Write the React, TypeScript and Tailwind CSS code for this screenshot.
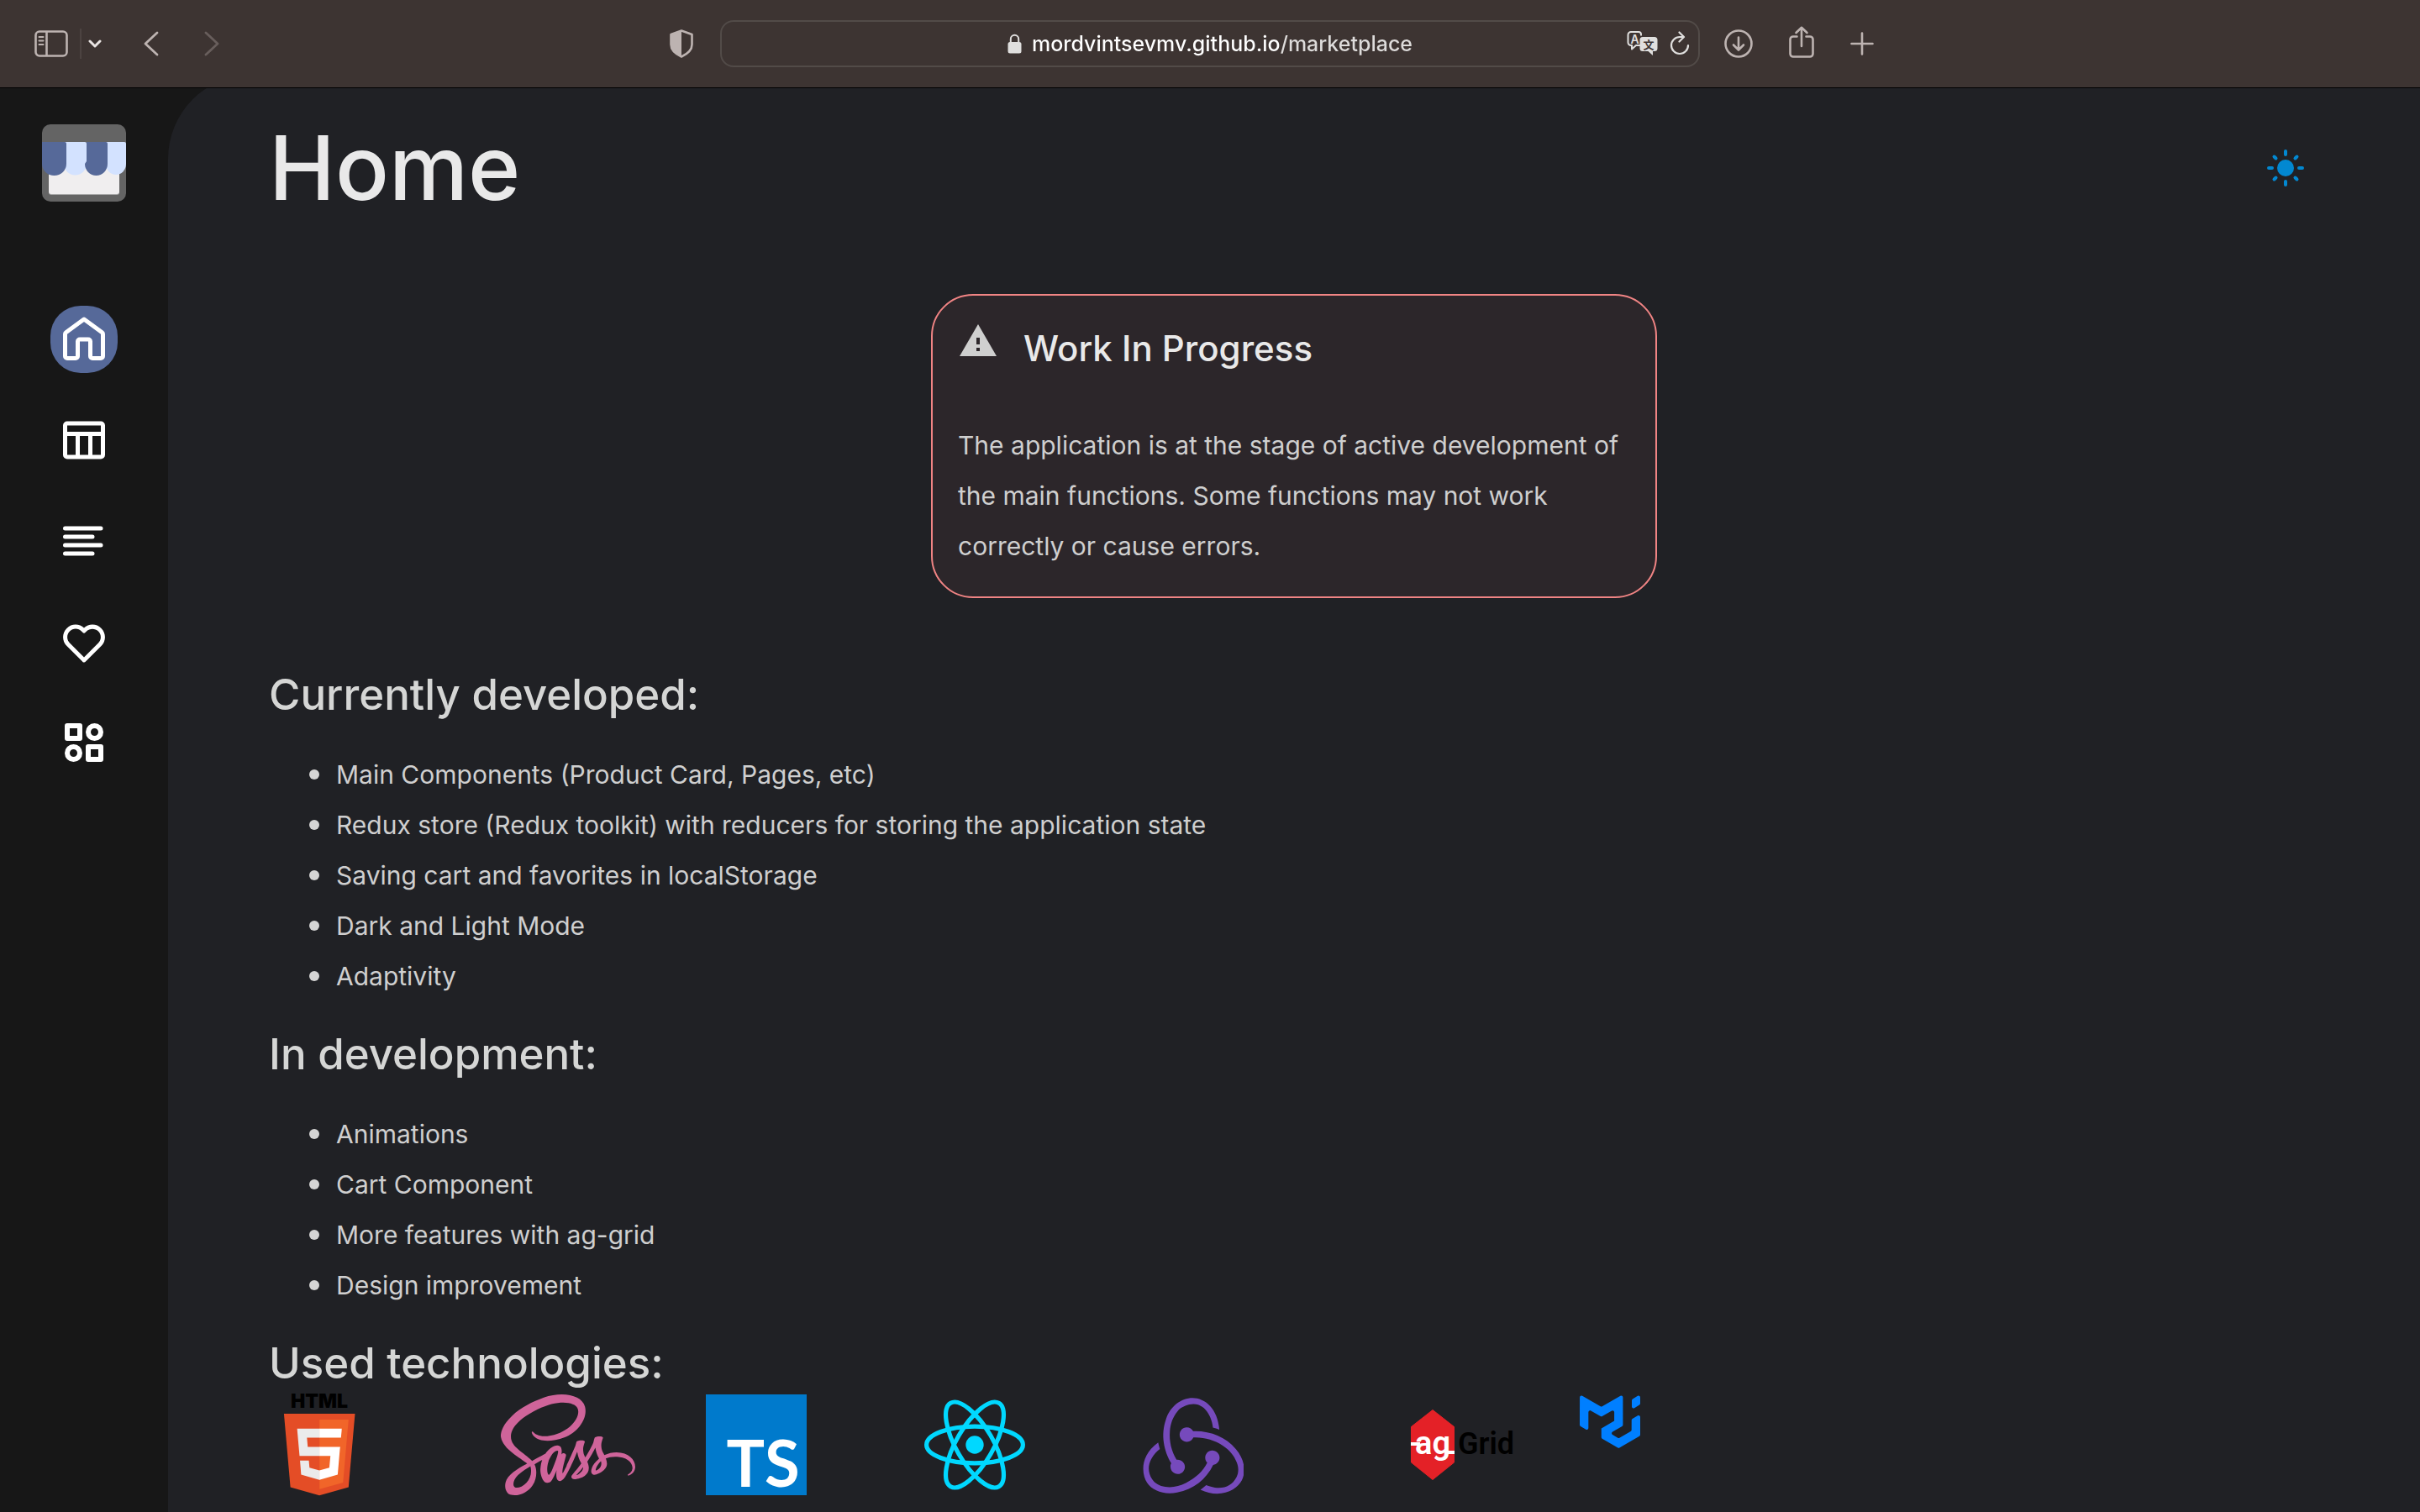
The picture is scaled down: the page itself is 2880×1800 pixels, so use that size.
import type { ReactNode } from "react";
import { BiHeart } from "react-icons/bi";
import { FaSass } from "react-icons/fa";

const developed = [
  "Main Components (Product Card, Pages, etc)",
  "Redux store (Redux toolkit) with reducers for storing the application state",
  "Saving cart and favorites in localStorage",
  "Dark and Light Mode",
  "Adaptivity",
];

const inDevelopment = ["Animations", "Cart Component", "More features with ag-grid", "Design improvement"];

function ToolbarButton({ label, children }: { label: string; children: ReactNode }) {
  return (
    <button type="button" aria-label={label} className="flex shrink-0 items-center justify-center text-[#bdb3b1]">
      {children}
    </button>
  );
}

function Toolbar() {
  return (
    <header className="grid h-[105px] shrink-0 grid-cols-[1fr_40.5%_1fr] items-center border-b border-black bg-[#3d3432]">
      <div className="flex items-center pr-8 pl-[41px]">
        <ToolbarButton label="Show sidebar">
          <svg width="40" height="34" viewBox="0 0 40 34" fill="none" stroke="currentColor" strokeWidth="2.6">
            <rect x="1.5" y="2.5" width="37" height="29" rx="4.5" />
            <path d="M14.5 2.5v29" />
            <path d="M5.5 9h5M5.5 13.5h5M5.5 18h5" strokeWidth="2" strokeLinecap="round" />
          </svg>
        </ToolbarButton>
        <span className="ml-3.5 h-9 w-0.5 bg-[#4c4341]" />
        <span className="ml-2 flex text-[#e9e4e3]">
          <button type="button" aria-label="Sidebar options">
            <svg width="16" height="12" viewBox="0 0 16 12" fill="none" stroke="currentColor" strokeWidth="3" strokeLinecap="round" strokeLinejoin="round">
              <path d="M2 3l6 6 6-6" />
            </svg>
          </button>
        </span>
        <div className="ml-[50px] flex gap-[54px]">
          <ToolbarButton label="Back">
            <svg width="18" height="30" viewBox="0 0 18 30" fill="none" stroke="currentColor" strokeWidth="2.8" strokeLinecap="round" strokeLinejoin="round">
              <path d="M16 2L2 15l14 13" />
            </svg>
          </ToolbarButton>
          <ToolbarButton label="Forward">
            <svg width="18" height="30" viewBox="0 0 18 30" fill="none" stroke="#685e5c" strokeWidth="2.8" strokeLinecap="round" strokeLinejoin="round">
              <path d="M2 2l14 13L2 28" />
            </svg>
          </ToolbarButton>
        </div>
        <div className="ml-auto">
          <ToolbarButton label="Privacy report">
            <svg width="28" height="34" viewBox="0 0 28 34">
              <path d="M14 1.5L26.500 6v12c0 6-5 11-12.500 14.500C6.500 29 1.500 24 1.500 18V6z" fill="none" stroke="currentColor" strokeWidth="2.600" strokeLinejoin="round" />
              <path d="M14 1.500V32.500C6.500 29 1.500 24 1.500 18V6z" fill="currentColor" />
            </svg>
          </ToolbarButton>
        </div>
      </div>
      <div className="grid h-14 grid-cols-[1fr_auto_1fr] items-center rounded-2xl border-2 border-[#524b48] text-[#e0dfde]">
        <span />
        <label className="flex items-center gap-3">
          <svg width="17" height="24" viewBox="0 0 17 24">
            <rect x="0.500" y="10" width="16" height="13.500" rx="2.500" fill="currentColor" />
            <path d="M3.800 11V6.500a4.700 4.700 0 0 1 9.400 0V11" fill="none" stroke="currentColor" strokeWidth="2" />
          </svg>
          <input
            type="text"
            aria-label="Address"
            defaultValue="mordvintsevmv.github.io/marketplace"
            className="field-sizing-content bg-linear-to-r from-white from-65% to-[#dedcdb] to-65% bg-clip-text font-[Inter,sans-serif] text-[25px] leading-8 font-medium text-transparent outline-none"
          />
        </label>
        <div className="flex items-center justify-end gap-3.5 pr-2.5">
          <button type="button" aria-label="Translate">
            <svg width="38" height="32" viewBox="0 0 38 32">
              <path d="M17 6.500V5a3 3 0 0 0-3-3H5a3.500 3.500 0 0 0-3.500 3.500v9A3.500 3.500 0 0 0 5 18h1v4.500L11 18h5" transform="translate(1 0)" fill="none" stroke="currentColor" strokeWidth="2" strokeLinejoin="round" />
              <text x="5.500" y="15.500" fontSize="14" fontWeight="600" fontFamily="Inter, sans-serif" fill="currentColor">A</text>
              <path d="M20 8h14a3.500 3.500 0 0 1 3.500 3.500v10A3.500 3.500 0 0 1 34 25h-2v5l-5.500-5H20a3.500 3.500 0 0 1-3.500-3.500v-10A3.500 3.500 0 0 1 20 8z" fill="currentColor" />
              <text x="20.500" y="21.500" fontSize="13" fontWeight="700" fontFamily="'Noto Sans CJK SC', sans-serif" fill="#3d3432">文</text>
            </svg>
          </button>
          <button type="button" aria-label="Reload">
            <svg width="24" height="30" viewBox="0 0 24 30" fill="none" stroke="currentColor" strokeWidth="2.200" strokeLinecap="round" strokeLinejoin="round">
              <path d="M22 17a10 10 0 1 1-10-10h4" />
              <path d="M11.500 1.500L17 7l-5.500 5.500" />
            </svg>
          </button>
        </div>
      </div>
      <div className="flex items-center pl-[29px]">
        <ToolbarButton label="Downloads">
          <svg width="34" height="34" viewBox="0 0 34 34" fill="none" stroke="currentColor" strokeWidth="2.600" strokeLinecap="round" strokeLinejoin="round">
            <circle cx="17" cy="17" r="15.500" />
            <path d="M17 9.500V24M11 18.500l6 6 6-6" />
          </svg>
        </ToolbarButton>
        <span className="ml-[42px] flex pb-1">
          <ToolbarButton label="Share">
            <svg width="32" height="38" viewBox="0 0 32 38" fill="none" stroke="currentColor" strokeWidth="2.600" strokeLinecap="round" strokeLinejoin="round">
              <path d="M10.500 12.500H6A3.500 3.500 0 0 0 2.500 16v17A3.500 3.500 0 0 0 6 36.500h20a3.500 3.500 0 0 0 3.500-3.500V16a3.500 3.500 0 0 0-3.500-3.500h-4.500" />
              <path d="M16 24V2M9.500 8L16 1.800 22.500 8" />
            </svg>
          </ToolbarButton>
        </span>
        <span className="ml-[42px] flex">
          <ToolbarButton label="New tab">
            <svg width="28" height="28" viewBox="0 0 28 28" fill="none" stroke="currentColor" strokeWidth="2.600" strokeLinecap="round">
              <path d="M14 1.500v25M1.500 14h25" />
            </svg>
          </ToolbarButton>
        </span>
      </div>
    </header>
  );
}

function StoreLogo() {
  return (
    <svg width="100" height="92" viewBox="0 0 100 92">
      <rect width="100" height="92" rx="10" fill="#646464" />
      <path d="M8 40h84v41a3 3 0 0 1-3 3H11a3 3 0 0 1-3-3z" fill="#a9a9a9" />
      <path d="M8 40h84v40a3 3 0 0 1-3 3H11a3 3 0 0 1-3-3z" fill="#f0eeef" />
      <path d="M26 21h25a2 2 0 0 1 2 2v24a13 13 0 0 1-27 0z" fill="#d3e2ff" />
      <path d="M76 21h22a2 2 0 0 1 2 2v24a12 13 0 0 1-24 0z" fill="#d3e2ff" />
      <path d="M0 21h27a2 2 0 0 1 2 2v24a14.500 14 0 0 1-29 0z" fill="#566999" />
      <path d="M53 21h23a2 2 0 0 1 2 2v24a13.500 14 0 0 1-27 0l2-3z" fill="#566999" />
    </svg>
  );
}

function NavButton({ label, active, children }: { label: string; active?: boolean; children: ReactNode }) {
  return (
    <button
      type="button"
      aria-label={label}
      className={
        active
          ? "flex size-20 items-center justify-center rounded-[36px] bg-[#566999] text-white"
          : "flex size-20 items-center justify-center rounded-[36px] text-white"
      }
    >
      {children}
    </button>
  );
}

function Sidebar() {
  return (
    <aside className="flex w-[200px] shrink-0 flex-col items-center pt-[43px]">
      <a href="#home" aria-label="Marketplace">
        <StoreLogo />
      </a>
      <nav className="mt-[124px] flex flex-col gap-10">
        <NavButton label="Home" active>
          <svg width="60" height="60" viewBox="0 0 24 24" fill="none" stroke="currentColor" strokeWidth="2" strokeLinecap="round" strokeLinejoin="round">
            <path d="M12 2.400L3.400 8.700a1 1 0 0 0-.4.800V20a1 1 0 0 0 1 1h4a1 1 0 0 0 1-1v-7a1 1 0 0 1 1-1h4a1 1 0 0 1 1 1v7a1 1 0 0 0 1 1h4a1 1 0 0 0 1-1V9.500a1 1 0 0 0-.4-.800z" />
          </svg>
        </NavButton>
        <NavButton label="Table">
          <svg width="60" height="60" viewBox="0 0 24 24" fill="none" stroke="currentColor" strokeWidth="2">
            <rect x="3" y="4" width="18" height="16" rx="1" />
            <path d="M3 9h18M9 9v11M15 9v11" />
          </svg>
        </NavButton>
        <NavButton label="List">
          <svg width="60" height="60" viewBox="0 0 24 24" fill="none" stroke="currentColor" strokeWidth="2" strokeLinecap="round">
            <path d="M3 6h17M3 10h13M3 14h17M3 18h13" />
          </svg>
        </NavButton>
        <NavButton label="Favorites">
          <BiHeart size={60} className="mt-1" />
        </NavButton>
        <NavButton label="Categories">
          <svg width="60" height="60" viewBox="0 0 60 60" fill="none" stroke="currentColor" strokeWidth="6" strokeLinejoin="round">
            <rect x="10" y="10" width="15" height="15" />
            <circle cx="42.500" cy="17.500" r="7.500" />
            <circle cx="17.500" cy="42.500" r="7.500" />
            <rect x="35" y="35" width="15" height="15" />
          </svg>
        </NavButton>
      </nav>
    </aside>
  );
}

function Section({ title, items }: { title: string; items: string[] }) {
  return (
    <section>
      <h2 className="text-[51px] leading-[60px] font-medium text-[#d5d6d5]">{title}</h2>
      <ul className="mt-[35px]">
        {items.map((item) => (
          <li key={item} className="flex items-center gap-5 pl-12">
            <span className="size-3 shrink-0 rounded-full bg-[#d5d5d5]" />
            {item}
          </li>
        ))}
      </ul>
    </section>
  );
}

function Html5Logo() {
  return (
    <svg width="120" height="120" viewBox="0 0 120 120" role="img" aria-label="HTML5" className="overflow-visible">
      <text x="60" y="16" textAnchor="middle" fontSize="23" fontWeight="900" fontFamily="Inter, sans-serif" fill="#000">
        HTML
      </text>
      <g transform="translate(12.300 23) scale(0.1875 0.190)">
        <path d="M71 460L30 0h451l-41 460-185 52z" fill="#e44d26" />
        <path d="M256 472l149-41 35-394H256z" fill="#f16529" />
        <path d="M256 208h-75l-5-58h80V94H114l1 15 14 156h127zM256 355h-1l-63-17-4-45h-56l7 89 116 32h1z" fill="#ebebeb" />
        <path d="M255 208v57h70l-7 73-63 17v59l116-32 1-10 13-149 2-15h-16zM255 94v56h137l1-12 3-29 1-15z" fill="#fff" />
      </g>
    </svg>
  );
}

function ReactLogo() {
  return (
    <svg width="120" height="120" viewBox="-11.500 -11.500 23 23" role="img" aria-label="React">
      <circle r="2.050" fill="#00d8ff" />
      <g fill="none" stroke="#00d8ff">
        <ellipse rx="11" ry="4.200" />
        <ellipse rx="11" ry="4.200" transform="rotate(60)" />
        <ellipse rx="11" ry="4.200" transform="rotate(120)" />
      </g>
    </svg>
  );
}

function ReduxLogo() {
  return (
    <svg width="120" height="120" viewBox="10.800 10.500 78.500 78.500" fill="#764abc" role="img" aria-label="Redux">
      <path d="M65.6 65.4c2.9-.3 5.1-2.8 5-5.8-.1-3-2.6-5.4-5.6-5.4h-.2c-3.1.1-5.5 2.7-5.4 5.8.1 1.5.7 2.8 1.6 3.7-3.4 6.7-8.6 11.6-16.4 15.7-5.3 2.8-10.8 3.8-16.3 3.1-4.5-.6-8-2.6-10.2-5.9-3.2-4.9-3.5-10.2-.8-15.5 1.9-3.8 4.9-6.6 6.8-8-.4-1.3-1-3.5-1.3-5.1-14.5 10.500-13 24.700-8.600 31.400 3.300 5 10 8.100 17.400 8.100 2 0 4-.2 6-.7 12.800-2.500 22.500-10.100 28-21.400z" />
      <path d="M83.200 53c-7.600-8.900-18.800-13.800-31.600-13.800H50c-.9-1.800-2.800-3-4.900-3h-.2c-3.100.1-5.500 2.700-5.400 5.800.1 3 2.600 5.400 5.600 5.400h.2c2.200-.1 4.100-1.500 4.900-3.400H52c7.600 0 14.800 2.200 21.300 6.500 5 3.300 8.600 7.600 10.600 12.800 1.700 4.200 1.600 8.300-.2 11.800-2.800 5.300-7.500 8.200-13.700 8.200-4 0-7.800-1.200-9.800-2.100-1.100 1-3.100 2.600-4.500 3.600 4.300 2 8.700 3.100 12.900 3.100 9.600 0 16.700-5.300 19.400-10.600 2.900-5.800 2.700-15.800-4.800-24.300z" />
      <path d="M32.400 67.100c.1 3 2.600 5.400 5.600 5.400h.2c3.100-.1 5.500-2.700 5.400-5.800-.1-3-2.600-5.400-5.600-5.400h-.2c-.2 0-.5 0-.7.1-4.100-6.800-5.800-14.200-5.200-22.200.4-6 2.400-11.200 5.900-15.500 2.900-3.700 8.500-5.500 12.300-5.600 10.600-.2 15.100 13 15.300 18.300 1.300.3 3.500 1 5 1.500-1.200-16.200-11.200-24.600-20.800-24.600-9 0-17.300 6.500-20.600 16.100-4.600 12.800-1.600 25.100 4 34.800-.5.7-.8 1.800-.6 2.900z" />
    </svg>
  );
}

function AgGridLogo() {
  return (
    <svg width="240" height="120" viewBox="0 0 240 120" role="img" aria-label="ag-Grid">
      <path d="M85 18.500L110.500 38.500V81L85 101.500 59.500 81V38.500z" fill="#e42127" stroke="#e42127" strokeLinejoin="round" />
      <path d="M59 59h11M101 69h10" stroke="#fff" strokeWidth="4" />
      <text x="85" y="71" textAnchor="middle" fontSize="38" fontWeight="600" fontFamily="Roboto, sans-serif" fill="#fff">
        ag
      </text>
      <text x="115" y="71" fontSize="36" fontWeight="600" fontFamily="Roboto, sans-serif" fill="#000">
        Grid
      </text>
    </svg>
  );
}

function MuiLogo() {
  return (
    <svg width="72" height="64" viewBox="0 0 36 32" fill="#007fff" role="img" aria-label="MUI">
      <path d="M30.343 21.976a1 1 0 00.502-.864l.018-5.787a1 1 0 01.502-.864l3.137-1.802a1 1 0 011.498.867v10.521a1 1 0 01-.502.867l-11.839 6.8a1 1 0 01-.994.001l-9.291-5.314a1 1 0 01-.504-.868v-5.305c0-.006.007-.01.013-.007.005.003.012 0 .012-.007v-.006c0-.004.002-.008.006-.01l7.652-4.396c.007-.004.004-.015-.004-.015a.008.008 0 01-.008-.008l.015-5.201a1 1 0 00-1.500-.87l-5.687 3.277a1 1 0 01-.998 0L6.666 9.700a1 1 0 00-1.499.866v9.400a1 1 0 01-1.496.869l-3.166-1.810a1 1 0 01-.504-.870l.028-16.430A1 1 0 011.527.860l10.845 6.229a1 1 0 00.996 0L24.210.860a1 1 0 011.498.868v16.434a1 1 0 01-.501.867l-5.678 3.270a1 1 0 00.004 1.735l3.132 1.783a1 1 0 00.993-.002l6.685-3.839zM31 7.234a1 1 0 001.514.857l3-1.800A1 1 0 0036 5.434V1.766A1 1 0 0034.486.910l-3 1.800a1 1 0 00-.486.857v3.668z" />
    </svg>
  );
}

function Tech({ children }: { children: ReactNode }) {
  return <li className="flex h-[120px] w-[260px] shrink-0 items-start">{children}</li>;
}

function Technologies() {
  return (
    <section>
      <h2 className="text-[51px] leading-[60px] font-medium text-[#d5d6d5]">Used technologies:</h2>
      <ul className="mt-[7px] flex">
        <Tech>
          <Html5Logo />
        </Tech>
        <Tech>
          <FaSass role="img" aria-label="Sass" className="-mt-1 ml-4 h-32 w-40 text-[#cf649a]" />
        </Tech>
        <Tech>
          <svg width="120" height="120" viewBox="0 0 120 120" role="img" aria-label="TypeScript" className="overflow-visible">
            <rect width="120" height="120" fill="#007acc" />
            <text x="68" y="110" textAnchor="middle" fontSize="76" fontWeight="700" fontFamily="Lato, sans-serif" fill="#fff">
              TS
            </text>
          </svg>
        </Tech>
        <Tech>
          <ReactLogo />
        </Tech>
        <Tech>
          <ReduxLogo />
        </Tech>
        <Tech>
          <AgGridLogo />
        </Tech>
        <Tech>
          <MuiLogo />
        </Tech>
      </ul>
    </section>
  );
}

export default function App() {
  return (
    <div className="flex min-h-screen flex-col bg-[#171717] font-[Inter,sans-serif]">
      <Toolbar />
      <div className="flex flex-1 overflow-hidden">
        <Sidebar />
        <main className="-mt-4 flex-1 rounded-tl-[100px] bg-[#202125] px-[120px] pt-[51px] text-[30px] leading-[60px] text-[#cfcfcf]">
          <div className="flex items-center justify-between pr-4">
            <h1 className="text-[106px] leading-[120px] font-medium text-[#e9e9e9]">Home</h1>
            <button type="button" aria-label="Switch to light mode">
              <svg width="48" height="48" viewBox="-24 -24 48 48" fill="#0288d1" stroke="#0288d1" strokeWidth="4" strokeLinecap="round">
                <circle r="10" stroke="none" />
                <path d="M0-20v4M0 16v4M-20 0h4M16 0h4M-13.500-13.500l2 2M11.500 11.500l2 2M-13.500 13.500l2-2M11.500-11.500l2-2" />
              </svg>
            </button>
          </div>

          <section className="mx-auto mt-[90px] max-w-[864px] rounded-[50px] border-2 border-[#f08484] bg-[#2c262a] p-[30px]">
            <div className="flex gap-[30px]">
              <svg width="48" height="48" viewBox="0 0 24 24" fill="#cfcfcf">
                <path d="M1 21h22L12 2 1 21zm12-3h-2v-2h2v2zm0-4h-2v-4h2v4z" />
              </svg>
              <h2 className="text-[42px] leading-[66px] font-medium text-[#e9e9e9]">Work In Progress</h2>
            </div>
            <p className="mt-[52px]">
              The application is at the stage of active development of the main functions. Some functions may not work
              correctly or cause errors.
            </p>
          </section>

          <div className="mt-[85px] flex flex-col gap-[33px]">
            <Section title="Currently developed:" items={developed} />
            <Section title="In development:" items={inDevelopment} />
            <Technologies />
          </div>
        </main>
      </div>
    </div>
  );
}
